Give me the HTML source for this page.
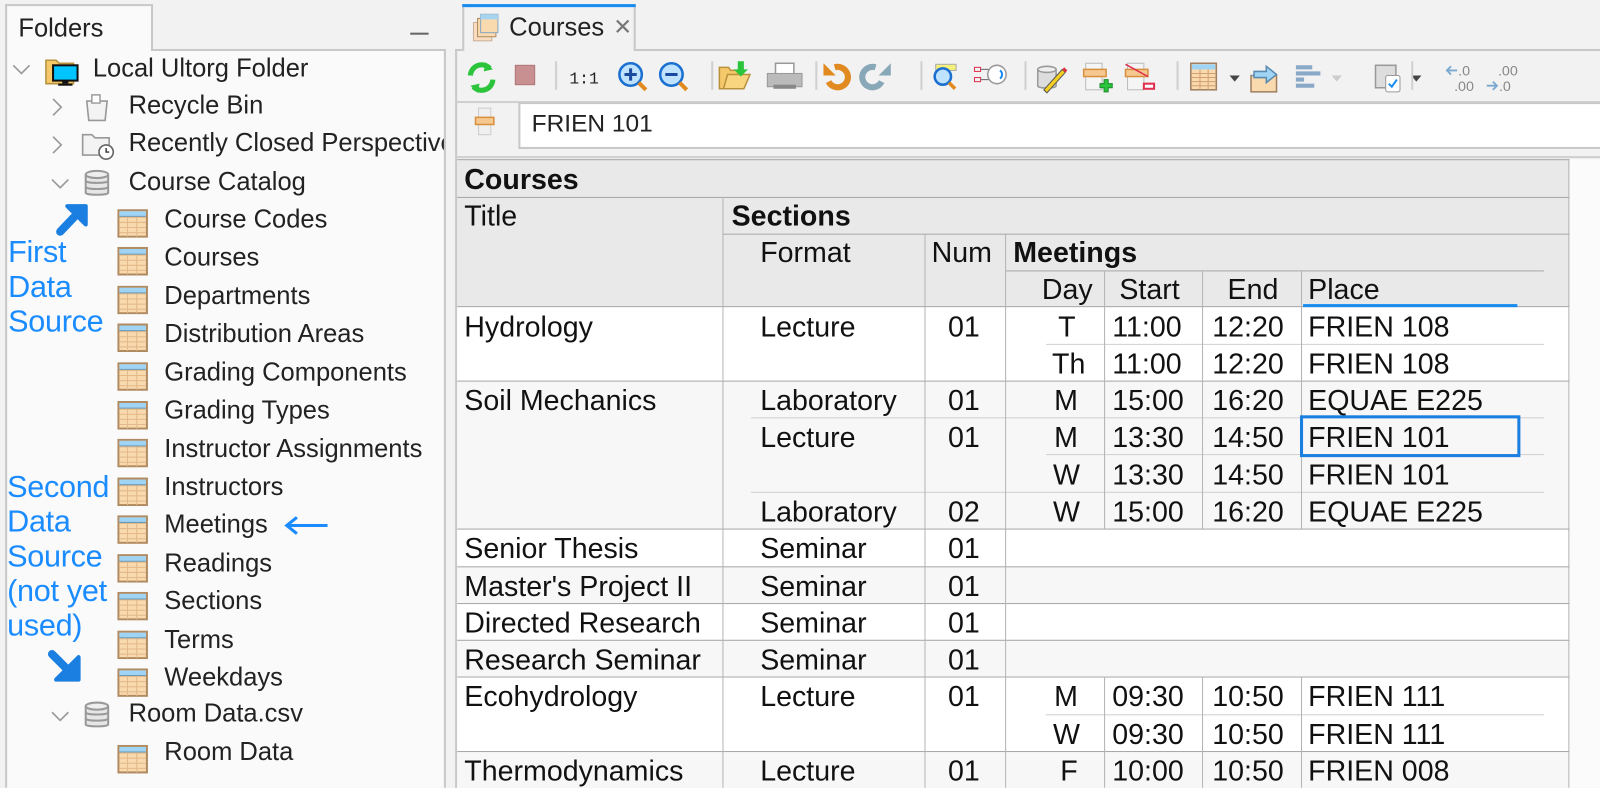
<!DOCTYPE html>
<html><head><meta charset="utf-8">
<style>
*{margin:0;padding:0;box-sizing:border-box}
body{width:1600px;height:772px;overflow:hidden;background:#f2f2f2;font-family:"Liberation Sans",sans-serif;color:#222;position:relative}
#root{position:absolute;left:0;top:0;width:1568px;height:757px;transform:scale(1.0204);transform-origin:0 0}
.a{position:absolute}
.tree{font-size:25px;white-space:nowrap}
.ann{color:#1a8cff;font-size:30px;line-height:34px;letter-spacing:-0.3px}
.t{font-size:28px;line-height:28px;color:#111;white-space:nowrap;position:absolute}
.b{font-weight:bold}
.hl{position:absolute;height:1px;background:#a8a8a8}
.hl2{position:absolute;height:1px;background:#d0d0d0}
.vl{position:absolute;width:1px;background:#b4b4b4}
.sep{position:absolute;top:60px;width:2px;height:28px;background:#d0d0d0}
</style></head><body>
<svg width="0" height="0" style="position:absolute"><defs>
<symbol id="tbl" viewBox="0 0 30 28"><rect x="1" y="1" width="28" height="26" fill="#f9d9ae" stroke="#b08a60" stroke-width="2"/><rect x="2" y="2" width="26" height="5" fill="#9fd4f5"/><path d="M2 8h26M2 13h26M2 18h26M2 23h26M10 7v20M19 7v20" stroke="#e2b988" stroke-width="1"/><path d="M2 7h26" stroke="#6a9ab8" stroke-width="1"/></symbol>
<symbol id="db" viewBox="0 0 26 28"><path d="M2 5v18c0 2.5 22 2.5 22 0V5" fill="#e6e6e6" stroke="#999" stroke-width="2"/><ellipse cx="13" cy="5" rx="11" ry="3.5" fill="#eee" stroke="#999" stroke-width="2"/><path d="M2 11c0 3 22 3 22 0M2 17c0 3 22 3 22 0" fill="none" stroke="#999" stroke-width="2"/></symbol>
</defs></svg>
<div id="root">
<!-- LEFT PANEL -->
<div class="a" style="left:5px;top:48px;width:432px;height:724px;background:#fafafa;border-left:2px solid #c8c8c8;border-right:2px solid #c8c8c8;border-top:2px solid #c8c8c8"></div>
<div class="a" style="left:5px;top:4px;width:145px;height:46px;background:#fafafa;border:2px solid #c8c8c8;border-bottom:none"></div>
<div class="a tree" style="left:18px;top:14px;font-size:25px">Folders</div>
<div class="a" style="left:402px;top:32px;width:18px;height:2px;background:#666"></div>

<div class="a" style="left:7px;top:50px;width:428px;height:720px;overflow:hidden">
<div class="a" style="left:-7px;top:-50px;width:440px;height:772px">
<svg class="a" style="left:10px;top:60px" width="22" height="16"><path d="M3 4l8 8 8-8" fill="none" stroke="#999" stroke-width="1.6"/></svg>
<svg class="a" style="left:44px;top:55px" width="34" height="30"><path d="M1 4h10l3 3h14v20H1z" fill="#f5c86a" stroke="#b8913d" stroke-width="1.5"/><rect x="8" y="9" width="24" height="15" fill="#00c4ff" stroke="#111" stroke-width="2"/><rect x="17" y="24" width="6" height="3" fill="#111"/><rect x="13" y="27" width="14" height="2" fill="#111"/></svg>
<div class="a tree" style="left:91px;top:53px">Local Ultorg Folder</div>

<svg class="a" style="left:48px;top:94px" width="16" height="22"><path d="M4 3l8 8-8 8" fill="none" stroke="#999" stroke-width="1.6"/></svg>
<svg class="a" style="left:82px;top:90px" width="26" height="30"><path d="M3 9h20l-2 19H5z" fill="#f3f3f3" stroke="#999" stroke-width="1.6"/><rect x="8" y="3" width="8" height="8" fill="#fff" stroke="#999" stroke-width="1.4"/></svg>
<div class="a tree" style="left:126px;top:89px">Recycle Bin</div>

<svg class="a" style="left:48px;top:131px" width="16" height="22"><path d="M4 3l8 8-8 8" fill="none" stroke="#999" stroke-width="1.6"/></svg>
<svg class="a" style="left:79px;top:128px" width="34" height="30"><path d="M2 4h9l3 3h14v17H2z" fill="#f3f3f3" stroke="#999" stroke-width="1.6"/><circle cx="25" cy="21" r="7" fill="#fff" stroke="#666" stroke-width="1.6"/><path d="M25 17v4h3" fill="none" stroke="#333" stroke-width="1.4"/></svg>
<div class="a tree" style="left:126px;top:126px">Recently Closed Perspectives</div>

<svg class="a" style="left:48px;top:172px" width="22" height="16"><path d="M3 4l8 8 8-8" fill="none" stroke="#999" stroke-width="1.6"/></svg>
<svg class="a" style="left:82px;top:166px" width="26" height="28"><use href="#db"/></svg>
<div class="a tree" style="left:126px;top:164px">Course Catalog</div>

<svg class="a" style="left:52px;top:193px" width="40" height="40"><path d="M7 34L28 12" stroke="#1a7fe0" stroke-width="8" stroke-linecap="round"/><path d="M14 9h18v18z" fill="#1a7fe0" stroke="#1a7fe0" stroke-width="4" stroke-linejoin="round"/></svg>

<div class="a ann" style="left:8px;top:231px">First<br>Data<br>Source</div>
<div class="a ann" style="left:7px;top:461px">Second<br>Data<br>Source<br>(not yet<br>used)</div>
<svg class="a" style="left:278px;top:505px" width="46" height="20"><path d="M3 10h40" stroke="#1a8cff" stroke-width="3"/><path d="M13 2L3 10l10 8" fill="none" stroke="#1a8cff" stroke-width="3"/></svg>
<svg class="a" style="left:45px;top:636px" width="40" height="36"><path d="M6 5l22 22" stroke="#1a7fe0" stroke-width="8" stroke-linecap="round"/><path d="M32 8v22H10z" fill="#1a7fe0" stroke="#1a7fe0" stroke-width="4" stroke-linejoin="round"/></svg>

<svg class="a" style="left:115px;top:205px" width="30" height="28"><use href="#tbl"/></svg><div class="a tree" style="left:161px;top:201px">Course Codes</div>
<svg class="a" style="left:115px;top:242px" width="30" height="28"><use href="#tbl"/></svg><div class="a tree" style="left:161px;top:238px">Courses</div>
<svg class="a" style="left:115px;top:280px" width="30" height="28"><use href="#tbl"/></svg><div class="a tree" style="left:161px;top:276px">Departments</div>
<svg class="a" style="left:115px;top:317px" width="30" height="28"><use href="#tbl"/></svg><div class="a tree" style="left:161px;top:313px">Distribution Areas</div>
<svg class="a" style="left:115px;top:355px" width="30" height="28"><use href="#tbl"/></svg><div class="a tree" style="left:161px;top:351px">Grading Components</div>
<svg class="a" style="left:115px;top:393px" width="30" height="28"><use href="#tbl"/></svg><div class="a tree" style="left:161px;top:388px">Grading Types</div>
<svg class="a" style="left:115px;top:430px" width="30" height="28"><use href="#tbl"/></svg><div class="a tree" style="left:161px;top:426px">Instructor Assignments</div>
<svg class="a" style="left:115px;top:468px" width="30" height="28"><use href="#tbl"/></svg><div class="a tree" style="left:161px;top:463px">Instructors</div>
<svg class="a" style="left:115px;top:505px" width="30" height="28"><use href="#tbl"/></svg><div class="a tree" style="left:161px;top:500px">Meetings</div>
<svg class="a" style="left:115px;top:543px" width="30" height="28"><use href="#tbl"/></svg><div class="a tree" style="left:161px;top:538px">Readings</div>
<svg class="a" style="left:115px;top:580px" width="30" height="28"><use href="#tbl"/></svg><div class="a tree" style="left:161px;top:575px">Sections</div>
<svg class="a" style="left:115px;top:618px" width="30" height="28"><use href="#tbl"/></svg><div class="a tree" style="left:161px;top:613px">Terms</div>
<svg class="a" style="left:115px;top:655px" width="30" height="28"><use href="#tbl"/></svg><div class="a tree" style="left:161px;top:650px">Weekdays</div>
<svg class="a" style="left:48px;top:694px" width="22" height="16"><path d="M3 4l8 8 8-8" fill="none" stroke="#999" stroke-width="1.6"/></svg>
<svg class="a" style="left:82px;top:687px" width="26" height="28"><use href="#db"/></svg><div class="a tree" style="left:126px;top:685px">Room Data.csv</div>
<svg class="a" style="left:115px;top:730px" width="30" height="28"><use href="#tbl"/></svg><div class="a tree" style="left:161px;top:723px">Room Data</div>
</div></div>

<!-- RIGHT PANEL -->
<div class="a" style="left:446px;top:48px;width:1154px;height:724px;border-left:2px solid #c8c8c8;border-top:2px solid #c8c8c8;background:#f2f2f2"></div>
<div class="a" style="left:453px;top:4px;width:170px;height:46px;background:#f2f2f2;border:2px solid #c8c8c8;border-top:none;border-bottom:none"></div>
<div class="a" style="left:453px;top:4px;width:170px;height:3px;background:#1a8cf0"></div>
<svg class="a" style="left:462px;top:13px" width="30" height="30"><rect x="2" y="9" width="18" height="18" fill="#f9dcc0" stroke="#c8b098"/><rect x="6" y="5" width="18" height="18" fill="#f9d9ae" stroke="#b08a60"/><rect x="9" y="1" width="17" height="18" fill="#f9d9ae" stroke="#8aa8c0"/><rect x="9" y="1" width="17" height="5" fill="#a8d4f0"/></svg>
<div class="a" style="left:499px;top:13px;font-size:25px">Courses</div>
<div class="a" style="left:601px;top:14px;font-size:22px;color:#777">✕</div>

<svg class="a" style="left:455px;top:58px" width="1140" height="36">
<g><path d="M6 16a11 11 0 0 1 19-7" fill="none" stroke="#2bc43a" stroke-width="5"/><path d="M21 3l7 7-9 2z" fill="#2bc43a"/><path d="M28 20a11 11 0 0 1-19 7" fill="none" stroke="#2bc43a" stroke-width="5"/><path d="M13 33l-7-7 9-2z" fill="#2bc43a"/></g>
<rect x="50" y="6" width="19" height="19" fill="#c89090" stroke="#b07878"/>
<text x="103" y="24" font-size="16" font-family="Liberation Mono" fill="#222">1:1</text>
<circle cx="163" cy="15" r="11" fill="#bfe3ff" stroke="#1a6fd0" stroke-width="2.5"/><path d="M157 15h12M163 9v12" stroke="#1a4aa0" stroke-width="3"/><path d="M171 23l7 7" stroke="#e08a20" stroke-width="4"/>
<circle cx="203" cy="15" r="11" fill="#bfe3ff" stroke="#1a6fd0" stroke-width="2.5"/><path d="M197 15h12" stroke="#1a4aa0" stroke-width="3"/><path d="M211 23l7 7" stroke="#e08a20" stroke-width="4"/>
<path d="M250 8h9l2 3h11v18h-22z" fill="#f5c86a" stroke="#b8913d" stroke-width="1.5"/><path d="M254 29l4-14h22l-6 14z" fill="#fad57f" stroke="#b8913d" stroke-width="1.5"/><path d="M268 2v8h-4l7 7 7-7h-4V2z" fill="#2bc43a"/>
<rect x="305" y="4" width="18" height="12" fill="#fff" stroke="#999" stroke-width="1.5"/><rect x="297" y="14" width="34" height="13" fill="#bbb" stroke="#999"/><rect x="303" y="25" width="22" height="4" fill="#888"/>
<path d="M357 22a10 10 0 1 0 6-14" fill="none" stroke="#e08a20" stroke-width="6"/><path d="M352 4v12h12z" fill="#e08a20"/>
<path d="M409 22a10 10 0 1 1 -6-14" fill="none" stroke="#88a8b8" stroke-width="6"/><path d="M418 4v12h-12z" fill="#88a8b8"/>
<rect x="462" y="5" width="20" height="6" fill="#f5f07a" stroke="#aaa"/><circle cx="469" cy="17" r="8" fill="#bfe3ff" stroke="#1a6fd0" stroke-width="2.5"/><path d="M475 23l6 6" stroke="#e08a20" stroke-width="3.5"/>
<rect x="500" y="8" width="6" height="4" fill="none" stroke="#e03050"/><rect x="500" y="18" width="6" height="4" fill="none" stroke="#e03050"/><path d="M506 10h8v10h-8" fill="none" stroke="#666"/><circle cx="522" cy="15" r="9" fill="#fff" stroke="#999" stroke-width="1.5"/><path d="M525 11a5 5 0 0 1 0 8" fill="none" stroke="#1a8cf0" stroke-width="2"/>
<g transform="translate(560,4)"><path d="M2 6v16c0 3 18 3 18 0V6" fill="#ddd" stroke="#999" stroke-width="1.5"/><ellipse cx="11" cy="6" rx="9" ry="3" fill="#eee" stroke="#999" stroke-width="1.5"/><path d="M8 26l18-20 3 3-18 20z" fill="#f5d020" stroke="#555"/><path d="M26 6l3 3 2-2-3-3z" fill="#e03040"/></g>
<g transform="translate(607,4)"><rect x="2" y="0" width="16" height="26" fill="#f5f5f5" stroke="#bbb"/><rect x="0" y="6" width="22" height="7" fill="#f5c890" stroke="#d89040" stroke-width="1.5"/><path d="M20 16h4v4h4v4h-4v4h-4v-4h-4v-4h4z" fill="#2bc43a" stroke="#1a8a2a"/></g>
<g transform="translate(648,4)"><rect x="2" y="0" width="16" height="26" fill="#f5f5f5" stroke="#bbb"/><rect x="0" y="6" width="22" height="7" fill="#f5c890" stroke="#d89040" stroke-width="1.5"/><path d="M0 1l22 12" stroke="#e03050" stroke-width="1.5"/><rect x="18" y="20" width="10" height="5" fill="#fff" stroke="#e03050" stroke-width="2"/></g>
<g transform="translate(711,4)"><rect x="1" y="0" width="25" height="26" fill="#f9d9ae" stroke="#a08060" stroke-width="1.5"/><rect x="2" y="1" width="23" height="5" fill="#9fd4f5"/><path d="M2 10h23M2 14h23M2 18h23M2 22h23M10 6v20M18 6v20" stroke="#d4a070" stroke-width="1"/></g>
<path d="M750 16h10l-5 6z" fill="#444"/>
<g transform="translate(770,2)"><rect x="1" y="14" width="25" height="16" fill="#f9d9ae" stroke="#a08060" stroke-width="1.5"/><path d="M1 14h25" stroke="#6a9ab8"/><path d="M4 10h12V5l10 8-10 8v-5H4z" fill="#9fd4f5" stroke="#5a8ab0" stroke-width="1.5"/></g>
<path d="M815 8h16M815 14h24M815 20h8M815 26h18" stroke="#8aa8c8" stroke-width="4"/>
<path d="M850 16h10l-5 6z" fill="#ccc"/>
<g transform="translate(893,4)"><rect x="0" y="2" width="20" height="22" fill="#ddd" stroke="#999" stroke-width="1.5"/><rect x="10" y="12" width="14" height="16" rx="2" fill="#fff" stroke="#999"/><path d="M13 20l3 3 5-7" fill="none" stroke="#1a8cf0" stroke-width="2"/></g>
<path d="M928 16h10l-5 6z" fill="#444"/>
<text x="974" y="16" font-size="14" fill="#888">.0</text><path d="M963 11h10M967 7l-4 4 4 4" fill="none" stroke="#7aa8d0" stroke-width="1.8"/><text x="970" y="31" font-size="14" fill="#888">.00</text>
<text x="1013" y="16" font-size="14" fill="#888">.00</text><path d="M1002 26h10M1008 22l4 4-4 4" fill="none" stroke="#7aa8d0" stroke-width="1.8"/><text x="1014" y="31" font-size="14" fill="#888">.0</text>
</svg>
<div class="sep" style="left:544px"></div><div class="sep" style="left:697px"></div><div class="sep" style="left:799px"></div><div class="sep" style="left:902px"></div><div class="sep" style="left:1004px"></div><div class="sep" style="left:1153px"></div><div class="sep" style="left:1383px"></div>
<div class="a" style="left:446px;top:99px;width:1154px;height:2px;background:#cfcfcf"></div>

<svg class="a" style="left:465px;top:105px" width="22" height="30"><rect x="4" y="1" width="12" height="26" fill="#f0f0f0" stroke="#ccc"/><rect x="1" y="10" width="18" height="7" fill="#f5c890" stroke="#d89040" stroke-width="1.5"/></svg>
<div class="a" style="left:508px;top:100px;width:1092px;height:46px;background:#fff;border:2px solid #c8c8c8;border-right:none"></div>
<div class="a" style="left:521px;top:108px;font-size:24px;color:#222">FRIEN 101</div>
<div class="a" style="left:446px;top:153px;width:1154px;height:2px;background:#cfcfcf"></div>

<!-- TABLE -->
<div class="a" style="left:448px;top:156px;width:1090px;height:145px;background:#e9e9e9"></div>
<div class="a" style="left:1538px;top:156px;width:62px;height:616px;background:#fbfbfb"></div>
<div class="a" style="left:448px;top:301px;width:1090px;height:72px;background:#fff"></div>
<div class="a" style="left:448px;top:373px;width:1090px;height:145px;background:#f7f7f7"></div>
<div class="a" style="left:448px;top:518px;width:1090px;height:37px;background:#fff"></div>
<div class="a" style="left:448px;top:555px;width:1090px;height:36px;background:#f7f7f7"></div>
<div class="a" style="left:448px;top:591px;width:1090px;height:36px;background:#fff"></div>
<div class="a" style="left:448px;top:627px;width:1090px;height:36px;background:#f7f7f7"></div>
<div class="a" style="left:448px;top:663px;width:1090px;height:73px;background:#fff"></div>
<div class="a" style="left:448px;top:736px;width:1090px;height:36px;background:#f7f7f7"></div>
<div class="vl" style="left:1537px;top:156px;height:616px"></div>

<div class="hl" style="left:448px;top:156px;width:1090px"></div>
<div class="hl" style="left:448px;top:193px;width:1090px"></div>
<div class="hl" style="left:708px;top:229px;width:830px"></div>
<div class="hl" style="left:985px;top:265px;width:528px"></div>
<div class="hl" style="left:448px;top:300px;width:1090px"></div>
<div class="a" style="left:1277px;top:298px;width:210px;height:3px;background:#1a8cf0"></div>
<div class="hl" style="left:448px;top:373px;width:1090px"></div>
<div class="hl" style="left:448px;top:518px;width:1090px"></div>
<div class="hl" style="left:448px;top:555px;width:1090px"></div>
<div class="hl" style="left:448px;top:591px;width:1090px"></div>
<div class="hl" style="left:448px;top:627px;width:1090px"></div>
<div class="hl" style="left:448px;top:663px;width:1090px"></div>
<div class="hl" style="left:448px;top:736px;width:1090px"></div>
<div class="hl2" style="left:1025px;top:337px;width:488px"></div>
<div class="hl2" style="left:736px;top:409px;width:777px"></div>
<div class="hl2" style="left:1025px;top:445px;width:488px"></div>
<div class="hl2" style="left:736px;top:482px;width:777px"></div>
<div class="hl2" style="left:1025px;top:700px;width:488px"></div>
<div class="vl" style="left:708px;top:193px;height:579px"></div>
<div class="vl" style="left:906px;top:229px;height:543px"></div>
<div class="vl" style="left:985px;top:229px;height:543px"></div>
<div class="vl" style="left:1082px;top:265px;height:253px"></div>
<div class="vl" style="left:1178px;top:265px;height:253px"></div>
<div class="vl" style="left:1275px;top:265px;height:253px"></div>
<div class="vl" style="left:1082px;top:663px;height:109px"></div>
<div class="vl" style="left:1178px;top:663px;height:109px"></div>
<div class="vl" style="left:1275px;top:663px;height:109px"></div>

<div class="t b" style="left:455px;top:162px">Courses</div>
<div class="t" style="left:455px;top:198px">Title</div>
<div class="t b" style="left:717px;top:198px">Sections</div>
<div class="t" style="left:745px;top:234px">Format</div>
<div class="t" style="left:913px;top:234px">Num</div>
<div class="t b" style="left:993px;top:234px">Meetings</div>
<div class="t" style="left:1021px;top:270px">Day</div>
<div class="t" style="left:1097px;top:270px">Start</div>
<div class="t" style="left:1203px;top:270px">End</div>
<div class="t" style="left:1282px;top:270px">Place</div>

<div class="t" style="left:455px;top:307px">Hydrology</div><div class="t" style="left:745px;top:307px">Lecture</div><div class="t" style="left:929px;top:307px">01</div>
<div class="t" style="left:1037px;top:307px">T</div><div class="t" style="left:1090px;top:307px">11:00</div><div class="t" style="left:1188px;top:307px">12:20</div><div class="t" style="left:1282px;top:307px">FRIEN 108</div>
<div class="t" style="left:1031px;top:343px">Th</div><div class="t" style="left:1090px;top:343px">11:00</div><div class="t" style="left:1188px;top:343px">12:20</div><div class="t" style="left:1282px;top:343px">FRIEN 108</div>

<div class="t" style="left:455px;top:379px">Soil Mechanics</div><div class="t" style="left:745px;top:379px">Laboratory</div><div class="t" style="left:929px;top:379px">01</div>
<div class="t" style="left:1033px;top:379px">M</div><div class="t" style="left:1090px;top:379px">15:00</div><div class="t" style="left:1188px;top:379px">16:20</div><div class="t" style="left:1282px;top:379px">EQUAE E225</div>
<div class="t" style="left:745px;top:415px">Lecture</div><div class="t" style="left:929px;top:415px">01</div>
<div class="t" style="left:1033px;top:415px">M</div><div class="t" style="left:1090px;top:415px">13:30</div><div class="t" style="left:1188px;top:415px">14:50</div><div class="t" style="left:1282px;top:415px">FRIEN 101</div>
<div class="a" style="left:1274px;top:407px;width:216px;height:41px;border:3px solid #1a7fe0"></div>
<div class="t" style="left:1032px;top:452px">W</div><div class="t" style="left:1090px;top:452px">13:30</div><div class="t" style="left:1188px;top:452px">14:50</div><div class="t" style="left:1282px;top:452px">FRIEN 101</div>
<div class="t" style="left:745px;top:488px">Laboratory</div><div class="t" style="left:929px;top:488px">02</div>
<div class="t" style="left:1032px;top:488px">W</div><div class="t" style="left:1090px;top:488px">15:00</div><div class="t" style="left:1188px;top:488px">16:20</div><div class="t" style="left:1282px;top:488px">EQUAE E225</div>

<div class="t" style="left:455px;top:524px">Senior Thesis</div><div class="t" style="left:745px;top:524px">Seminar</div><div class="t" style="left:929px;top:524px">01</div>
<div class="t" style="left:455px;top:561px">Master's Project II</div><div class="t" style="left:745px;top:561px">Seminar</div><div class="t" style="left:929px;top:561px">01</div>
<div class="t" style="left:455px;top:597px">Directed Research</div><div class="t" style="left:745px;top:597px">Seminar</div><div class="t" style="left:929px;top:597px">01</div>
<div class="t" style="left:455px;top:633px">Research Seminar</div><div class="t" style="left:745px;top:633px">Seminar</div><div class="t" style="left:929px;top:633px">01</div>

<div class="t" style="left:455px;top:669px">Ecohydrology</div><div class="t" style="left:745px;top:669px">Lecture</div><div class="t" style="left:929px;top:669px">01</div>
<div class="t" style="left:1033px;top:669px">M</div><div class="t" style="left:1090px;top:669px">09:30</div><div class="t" style="left:1188px;top:669px">10:50</div><div class="t" style="left:1282px;top:669px">FRIEN 111</div>
<div class="t" style="left:1032px;top:706px">W</div><div class="t" style="left:1090px;top:706px">09:30</div><div class="t" style="left:1188px;top:706px">10:50</div><div class="t" style="left:1282px;top:706px">FRIEN 111</div>

<div class="t" style="left:455px;top:742px">Thermodynamics</div><div class="t" style="left:745px;top:742px">Lecture</div><div class="t" style="left:929px;top:742px">01</div>
<div class="t" style="left:1039px;top:742px">F</div><div class="t" style="left:1090px;top:742px">10:00</div><div class="t" style="left:1188px;top:742px">10:50</div><div class="t" style="left:1282px;top:742px">FRIEN 008</div>
</div>
</body></html>
